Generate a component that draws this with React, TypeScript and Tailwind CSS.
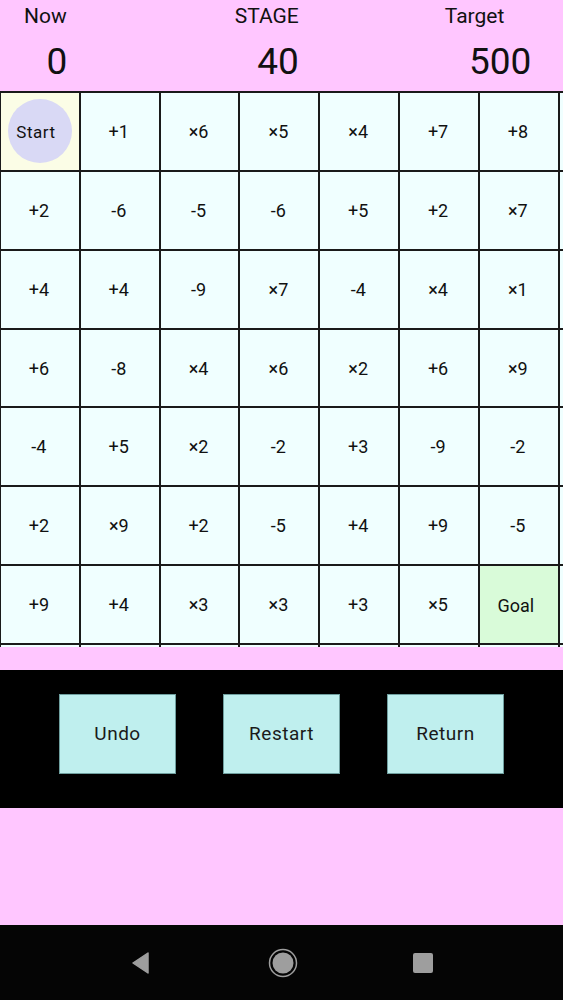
import React from 'react';

const ROWS: string[][] = [
  ['Start', '+1', '×6', '×5', '×4', '+7', '+8'],
  ['+2', '-6', '-5', '-6', '+5', '+2', '×7'],
  ['+4', '+4', '-9', '×7', '-4', '×4', '×1'],
  ['+6', '-8', '×4', '×6', '×2', '+6', '×9'],
  ['-4', '+5', '×2', '-2', '+3', '-9', '-2'],
  ['+2', '×9', '+2', '-5', '+4', '+9', '-5'],
  ['+9', '+4', '×3', '×3', '+3', '×5', 'Goal'],
  ['', '', '', '', '', '', ''],
];

const Cell: React.FC<{ label: string }> = ({ label }) => {
  const isStart = label === 'Start';
  const isGoal = label === 'Goal';
  const bg = isStart ? 'bg-[#fbfde6]' : isGoal ? 'bg-[#d9fbd9]' : 'bg-[#f0ffff]';
  return (
    <div
      className={`w-[79.83px] h-[78.86px] shrink-0 border-l-2 border-t-2 border-[#1a1a1a] flex items-center justify-center ${bg}`}
    >
      {isStart ? (
        <div className="w-[64px] h-[64px] rounded-full bg-[#d9d9f5] flex items-center justify-center text-[17px] tracking-[0.5px] text-[#111]">
          <span className="mr-[8px] mt-[3px]">Start</span>
        </div>
      ) : (
        <span className={`text-[18px] text-[#111] mr-[2px] ${isGoal ? 'mt-[2px] mr-[6px]' : ''}`}>{label}</span>
      )}
    </div>
  );
};

const NavBar: React.FC = () => (
  <div className="h-[75px] bg-[#050505] flex items-center justify-center gap-[113px]">
    <svg width="20" height="22" viewBox="0 0 20 22" className="mr-[4px]">
      <path d="M17 1 L17 21 L2 11 Z" fill="#9e9e9e" stroke="#9e9e9e" strokeWidth="1.5" strokeLinejoin="round" />
    </svg>
    <svg width="30" height="30" viewBox="0 0 30 30">
      <circle cx="15" cy="15" r="13.5" fill="none" stroke="#9e9e9e" strokeWidth="1.5" />
      <circle cx="15" cy="15" r="10.5" fill="#9e9e9e" />
    </svg>
    <div className="w-[20px] h-[20px] rounded-[2px] bg-[#9e9e9e] ml-[2px]" />
  </div>
);

export default function App() {
  return (
    <div className="w-[563px] h-[1000px] bg-[#ffc6ff] overflow-hidden flex flex-col" style={{ fontFamily: 'Roboto, "Noto Sans", sans-serif' }}>
      {/* header */}
      <div className="h-[91px] relative shrink-0">
        <div className="flex text-[21px] text-[#111] pt-[2px] leading-[28px]">
          <span className="ml-[24px]">Now</span>
          <span className="ml-[168px]">STAGE</span>
          <span className="ml-[146px]">Target</span>
        </div>
        <div className="flex text-[37px] text-[#111] mt-[12px] leading-[40px]">
          <span className="w-[114px] text-center">0</span>
          <span className="ml-[109px] w-[110px] text-center">40</span>
          <span className="ml-[136px] w-[56px] text-center">500</span>
        </div>
      </div>

      {/* board */}
      <div className="h-[556px] overflow-hidden shrink-0">
        <div className="ml-[-1px] flex flex-col">
          {ROWS.map((row, r) => (
            <div key={r} className="flex">
              {[...row, ''].map((c, i) => (
                <Cell key={i} label={c} />
              ))}
            </div>
          ))}
        </div>
      </div>

      <div className="h-[23px] shrink-0" />

      {/* controls */}
      <div className="h-[138px] bg-black flex items-start justify-center gap-[47px] pt-[24px] shrink-0">
        {['Undo', 'Restart', 'Return'].map((b) => (
          <button
            key={b}
            className="w-[117px] h-[80px] bg-[#bfefee] border border-[#6f9f9f] text-[19px] text-[#1a1a1a] tracking-[0.5px]"
          >
            {b}
          </button>
        ))}
      </div>

      <div className="h-[117px] shrink-0" />

      <NavBar />
    </div>
  );
}
